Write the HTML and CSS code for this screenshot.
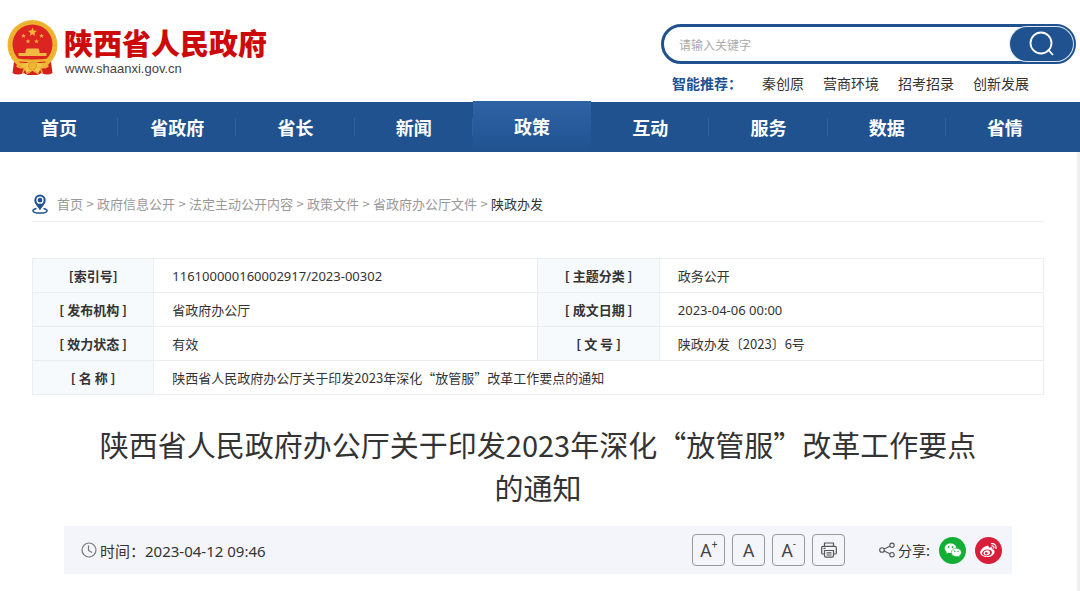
FILE: index.html
```
<!DOCTYPE html>
<html lang="zh-CN">
    <head>
        <meta charset="utf-8">
        <title>陕西省人民政府</title>
        <meta name="viewport" content="width=device-width, initial-scale=1.0">
        <link rel="stylesheet" href="styles.css">
    </head>
    <body>
        <header class="header">
            <a class="logo" href="#">
                <svg class="emblem" viewBox="0 0 50 56" aria-hidden="true">
                    <path d="M7 38 L5 53 Q10 56 16 53 L20 55 H30 L34 53 Q40 56 45 53 L43 38 Z" fill="#d3201c"/>
                    <circle cx="25" cy="25" r="25" fill="#efb632"/>
                    <circle cx="25" cy="25" r="22.500" fill="none" stroke="#e3a626" stroke-width="1" stroke-dasharray="2 2"/>
                    <circle cx="25" cy="24.500" r="20" fill="#dc2420"/>
                    <path d="M25 7.500l1.200 3.100 3.300.2-2.600 2.100.9 3.200-2.800-1.800-2.800 1.800.9-3.200-2.600-2.100 3.300-.2z" fill="#f5b73b"/>
                    <g fill="#f0a93a">
                        <path id="star" d="M16 13.500l.7 1.400 1.600.2-1.200 1.100.3 1.600-1.400-.8-1.400.8.3-1.600-1.200-1.100 1.600-.2z"/>
                        <use href="#star" x="18"/>
                        <use href="#star" x="4.500" y="5.500"/>
                        <use href="#star" x="13" y="5.500"/>
                    </g>
                    <path d="M19 28.500h12l1 2.500h-14zM18 31h14v2h7v3H11v-3h7z" fill="#f2b844"/>
                    <path d="M6 38q19 3 38 0l-4 8q-15 4-30 0z" fill="#efb632"/>
                    <path d="M12 42q13 2 26 0" fill="none" stroke="#d3201c" stroke-width="1"/>
                    <path d="M15 45q10-7 20 0l-4 8q-6-5-12 0z" fill="#f3c54a"/>
                    <circle cx="25" cy="46" r="4" fill="#efb632" stroke="#e09a22"/>
                    <path d="M9 46q5 3 9 1l-3 6M41 46q-5 3-9 1l3 6M19 54l6-4 6 4" fill="none" stroke="#f1b63a" stroke-width="1.500"/>
                </svg>
                <span class="logo-text">
                    <strong class="logo-name">陕西省人民政府</strong>
                    <span class="logo-url">www.shaanxi.gov.cn</span>
                </span>
            </a>
            <div class="search-area">
                <form class="search">
                    <input class="search-input" type="text" placeholder="请输入关键字" aria-label="请输入关键字">
                    <button class="search-button" type="button" aria-label="搜索">
                        <svg width="26" height="26" viewBox="0 0 26 26" fill="none" stroke="#fff" stroke-width="1.800">
                            <circle cx="12" cy="12" r="10.500"/>
                            <path d="M19 18.500l5 5.500"/>
                        </svg>
                    </button>
                </form>
                <div class="recommend">
                    <strong class="recommend-label">智能推荐：</strong>
                    <a href="#">秦创原</a>
                    <a href="#">营商环境</a>
                    <a href="#">招考招录</a>
                    <a href="#">创新发展</a>
                </div>
            </div>
        </header>
        <nav class="nav">
            <a href="#">首页</a>
            <a href="#">省政府</a>
            <a href="#">省长</a>
            <a href="#">新闻</a>
            <a class="active" href="#">政策</a>
            <a href="#">互动</a>
            <a href="#">服务</a>
            <a href="#">数据</a>
            <a href="#">省情</a>
        </nav>
        <main class="main">
            <div class="breadcrumb">
                <svg class="pin" width="16" height="20" viewBox="0 0 16 20" fill="none">
                    <path d="M4.500 14.500C2 15 1 16 1 16.700 1 18 4 19 8 19s7-1 7-2.300c0-.7-1-1.700-3.500-2.200" stroke="#20528f" stroke-width="1.600"/>
                    <path d="M8 0.500a5.700 5.700 0 0 0-5.700 5.700C2.300 10 6 12.500 8 16.500c2-4 5.700-6.500 5.700-10.300A5.700 5.700 0 0 0 8 .5z" fill="#20528f"/>
                    <circle cx="8" cy="6.200" r="3" fill="#20528f" stroke="#fff" stroke-width="1.300"/>
                </svg>
                <a href="#">首页</a><span>&gt;</span>
                <a href="#">政府信息公开</a><span>&gt;</span>
                <a href="#">法定主动公开内容</a><span>&gt;</span>
                <a href="#">政策文件</a><span>&gt;</span>
                <a href="#">省政府办公厅文件</a><span>&gt;</span>
                <a class="current" href="#">陕政办发</a>
            </div>
            <table class="info">
                <colgroup>
                    <col class="col-label"><col class="col-value"><col class="col-label"><col class="col-value">
                </colgroup>
                <tr>
                    <th scope="row">[索引号]</th>
                    <td class="num">116100000160002917/2023-00302</td>
                    <th scope="row">[ 主题分类 ]</th>
                    <td>政务公开</td>
                </tr>
                <tr>
                    <th scope="row">[ 发布机构 ]</th>
                    <td>省政府办公厅</td>
                    <th scope="row">[ 成文日期 ]</th>
                    <td class="num">2023-04-06 00:00</td>
                </tr>
                <tr>
                    <th scope="row">[ 效力状态 ]</th>
                    <td>有效</td>
                    <th scope="row">[ 文 号 ]</th>
                    <td>陕政办发〔2023〕6号</td>
                </tr>
                <tr>
                    <th scope="row">[ 名 称 ]</th>
                    <td colspan="3">陕西省人民政府办公厅关于印发2023年深化“放管服”改革工作要点的通知</td>
                </tr>
            </table>
            <article class="article">
                <h1 class="title">陕西省人民政府办公厅关于印发2023年深化“放管服”改革工作要点的通知</h1>
                <div class="toolbar">
                    <svg class="clock" width="16" height="16" viewBox="0 0 16 16" fill="none" stroke="#777" stroke-width="1.200">
                        <circle cx="8" cy="8" r="7"/>
                        <path d="M7.500 3.500v5l3.500 2"/>
                    </svg>
                    <span class="time">时间：<span class="num">2023-04-12 09:46</span></span>
                    <div class="tools">
                        <button type="button" aria-label="放大字体">A<sup>+</sup></button>
                        <button type="button" aria-label="默认字体">A</button>
                        <button type="button" aria-label="缩小字体">A<sup>-</sup></button>
                        <button type="button" aria-label="打印">
                            <svg width="16" height="16" viewBox="0 0 16 16" fill="none" stroke="#555" stroke-width="1.200">
                                <path d="M3.500 4V1h9v3M3.500 12H1.500Q.7 12 .7 11V5.500Q.7 4.300 2 4.300h12q1.300 0 1.300 1.200V11q0 1-.8 1h-2"/>
                                <path d="M3.500 8.500h9v5q0 1.700-1.500 1.700H5q-1.500 0-1.500-1.700zM5.500 10.800h5M5.500 13h5M2.500 6.300h2"/>
                            </svg>
                        </button>
                    </div>
                    <div class="share">
                        <svg width="16" height="16" viewBox="0 0 16 16" fill="none" stroke="#555" stroke-width="1.100">
                            <circle cx="3" cy="8" r="2.300"/>
                            <circle cx="13" cy="3.300" r="2.200"/>
                            <circle cx="13" cy="12.700" r="2.200"/>
                            <path d="M5.100 7l5.800-2.700M5.100 9l5.800 2.700"/>
                        </svg>
                        <span class="share-label">分享:</span>
                        <a class="share-link" href="#" aria-label="微信">
                            <svg width="27" height="27" viewBox="0 0 27 27">
                                <circle cx="13.500" cy="13.500" r="13.500" fill="#13ae36"/>
                                <path d="M11.500 6.500c-3.300 0-5.800 2.100-5.800 4.800 0 1.500.8 2.800 2.100 3.700l-.5 1.800 2.100-1.100c.7.200 1.400.3 2.100.3 3.300 0 5.800-2 5.800-4.700s-2.500-4.800-5.800-4.800z" fill="#fff"/>
                                <path d="M17.300 11.200c-2.800 0-5 1.900-5 4.200s2.200 4.200 5 4.200c.6 0 1.200-.1 1.700-.2l1.700.9-.4-1.500c1.200-.8 2-2 2-3.400 0-2.300-2.200-4.200-5-4.200z" fill="#fff" stroke="#13ae36" stroke-width=".6"/>
                                <g fill="#13ae36"><circle cx="9.600" cy="10" r=".9"/><circle cx="13.500" cy="10" r=".9"/><circle cx="15.700" cy="14.300" r=".7"/><circle cx="19" cy="14.300" r=".7"/></g>
                            </svg>
                        </a>
                        <a class="share-link" href="#" aria-label="微博">
                            <svg width="27" height="27" viewBox="0 0 27 27">
                                <circle cx="13.500" cy="13.500" r="13.500" fill="#d81e3a"/>
                                <path d="M11.500 9c1.300-.5 2.600 0 2.300 1.700 2-.8 4.100-.7 3.500 1.500 1.300.3 2.300 1.200 2.300 2.500 0 2.900-3.500 5.400-7.500 5.400-3.800 0-6.900-1.900-6.900-4.800 0-2.400 3.500-5.700 6.300-6.300z" fill="#fff"/>
                                <ellipse cx="12" cy="15.800" rx="5" ry="3.300" fill="#d81e3a" transform="rotate(-7 12 15.800)"/>
                                <ellipse cx="11.800" cy="15.900" rx="3.300" ry="2.500" fill="#fff" transform="rotate(-15 11.800 15.900)"/>
                                <circle cx="11.300" cy="16.200" r="1.300" fill="#d81e3a"/>
                                <path d="M16.500 6.700c3-.6 5.300 1.900 4.500 4.800M16.800 9c1.500-.3 2.400.8 2 2.100" fill="none" stroke="#fff" stroke-width="1.200" stroke-linecap="round"/>
                            </svg>
                        </a>
                    </div>
                </div>
            </article>
        </main>
    </body>
</html>
```

FILE: styles.css
```
* {
    box-sizing: border-box;
}

body {
    display: flex;
    flex-direction: column;
    min-height: 100vh;
    margin: 0;
    background: #fff;
    color: #333;
    font-family: "Noto Sans CJK SC", sans-serif;
    font-size: 13px;
}

a {
    color: inherit;
    text-decoration: none;
}

.num {
    font-family: "Noto Sans", sans-serif;
}

/* header */
.header {
    display: flex;
    justify-content: space-between;
    padding: 20px 4px 9px 7px;
}

.logo {
    display: flex;
    align-items: flex-start;
    gap: 6px;
}

.emblem {
    width: 51px;
    height: 56px;
}

.logo-text {
    display: flex;
    flex-direction: column;
    padding-top: 2px;
}

.logo-name {
    color: #cc0a0a;
    font-size: 29px;
    font-weight: 900;
    line-height: 40px;
}

.logo-url {
    padding-left: 1px;
    color: #444;
    font-family: "Liberation Sans", sans-serif;
    font-size: 13px;
    line-height: 14px;
}

.search-area {
    display: flex;
    flex-direction: column;
    gap: 9px;
    width: 415px;
    padding-top: 4px;
}

.search {
    display: flex;
    height: 40px;
    border: 3px solid #20528f;
    border-radius: 20px;
}

.search-input {
    flex: 1;
    min-width: 0;
    padding: 0 15px;
    border: 0;
    background: none;
    font: 12px "Noto Sans CJK SC", sans-serif;
    outline: none;
}

.search-input::placeholder {
    color: #aaa;
}

.search-button {
    display: flex;
    align-items: center;
    justify-content: center;
    width: 63px;
    padding: 0;
    border: 0;
    border-radius: 17px;
    background: #20528f;
    box-shadow: 0 0 0 1px #dbe5f0;
    cursor: pointer;
}

.recommend {
    display: flex;
    gap: 19px;
    padding-left: 11px;
    font-size: 14px;
    line-height: 20px;
}

.recommend-label {
    width: 71px;
    color: #20528f;
}

/* navigation */
.nav {
    display: grid;
    grid-template-columns: repeat(9, 1fr);
    height: 50px;
    padding-right: 16px;
    background: #20528f;
    color: #fff;
    font-size: 18px;
    font-weight: bold;
    line-height: 50px;
    text-align: center;
}

.nav a {
    background: linear-gradient(#2d629f, #2d629f) right center / 1px 18px no-repeat;
}

.nav a:last-child {
    background: none;
}

.nav .active {
    margin-top: -1px;
    background: linear-gradient(#2f63a6, #20528f);
}

/* content */
.main {
    flex: 1;
    padding: 34px 33px 17px 32px;
    border-right: 3px solid #f0f0f0;
}

.breadcrumb {
    display: flex;
    align-items: center;
    height: 36px;
    border-bottom: 1px solid #eee;
    color: #999;
    white-space: nowrap;
}

.breadcrumb span {
    width: 14px;
    text-align: center;
}

.breadcrumb .current {
    color: #333;
}

.pin {
    margin-right: 9px;
}

.info {
    width: 100%;
    margin-top: 36px;
    border-collapse: collapse;
    table-layout: fixed;
}

.info th,
.info td {
    height: 34px;
    padding: 0;
    border: 1px solid #eaeef1;
    line-height: 20px;
}

.info th {
    background: #f6fafd;
}

.info td {
    padding-left: 18px;
    text-align: left;
}

.col-label {
    width: 12%;
}

.col-value {
    width: 38%;
}

.article {
    padding: 0 32px;
}

.title {
    margin: 28px 0 17px;
    padding: 0 32px;
    font-size: 29px;
    font-weight: normal;
    line-height: 43px;
    text-align: center;
}

.toolbar {
    display: flex;
    align-items: center;
    height: 48px;
    padding: 0 10px 0 17px;
    background: #f4f5fb;
    font-size: 15px;
}

.time {
    flex: 1;
    padding-left: 3px;
}

.tools {
    display: flex;
    gap: 7px;
}

.tools button {
    display: flex;
    align-items: center;
    justify-content: center;
    width: 33px;
    height: 32px;
    padding: 0;
    border: 1px solid #999;
    border-radius: 4px;
    background: none;
    color: #444;
    font: 18px Roboto, sans-serif;
    cursor: pointer;
}

.tools sup {
    align-self: flex-start;
    font-size: 10px;
    line-height: 20px;
}

.share {
    display: flex;
    align-items: center;
    margin-left: 34px;
    font-size: 14px;
}

.share-label {
    padding-left: 3px;
}

.share-link {
    display: flex;
    margin-left: 9px;
}
```
